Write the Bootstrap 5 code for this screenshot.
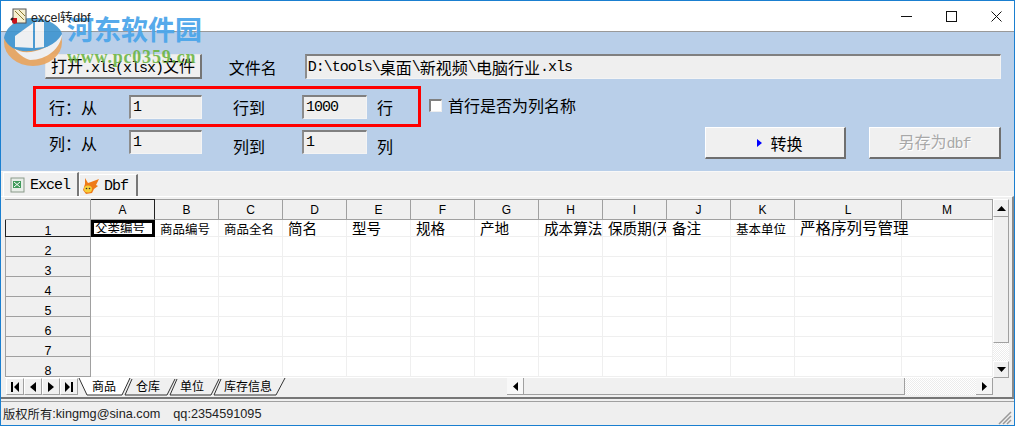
<!DOCTYPE html>
<html lang="zh-CN">
<head>
<meta charset="utf-8">
<title>excel转dbf</title>
<link href="https://cdn.jsdelivr.net/npm/bootstrap@5.3.0/dist/css/bootstrap.min.css" rel="stylesheet">
<style>
html,body{margin:0;padding:0;background:#fff;overflow:hidden}
body{font-family:"Noto Sans CJK SC","Liberation Sans",sans-serif;color:#000}
.win{width:1015px;height:426px;border:1px solid #1a7fd0;position:relative;overflow:hidden;background:#f0f0f0}
.lat{font-family:"Liberation Mono",monospace;font-size:15px;letter-spacing:-1px}
.cjk{font-family:"Noto Sans CJK SC",sans-serif;font-size:16px;line-height:1}
.titlebar{height:31px;background:#fff;border-bottom:1px solid #999;padding-left:9px}
.title-top{position:relative;z-index:3}
.title-txt{font:12.5px "Liberation Sans",sans-serif;color:#222;margin-left:4px}
.winbtns{margin-left:auto;padding-right:12px;gap:34px}
.panel{height:139px;background:#b9cfe9;padding:22px 13px 0 32px}
.row-a{height:25px;margin-bottom:16px}
.row-b{height:24px;margin-bottom:11px}
.row-c{height:29px}
.vb-btn{background:#f0f0f0;border-style:solid;border-width:1px 2px 2px 1px;border-color:#fff #6f6f6f #6f6f6f #fff;border-radius:0;padding:0;color:#000;line-height:1}
.vb-btn:disabled{background:#f0f0f0;opacity:1;color:#a8a8a8;border-color:#fff #6f6f6f #6f6f6f #fff;text-shadow:1px 1px 0 #fff}
.btn-open{width:157px;height:25px;margin-left:12px;border-width:1px 2px 2px 1px;border-color:#e8e8e8 #757575 #757575 #e8e8e8}
.btn-go{width:141px;height:32px;padding-left:10px}
.btn-save{width:132px;height:32px;margin-left:23px}
.btn-pair{margin-top:-3px}
.vb-input{background:#efefef;border-style:solid;border-width:2px 1px 1px 2px;border-color:#808080 #f4f4f4 #f4f4f4 #8c8c8c;border-radius:0;padding:0 0 0 2px;color:#000;box-shadow:none;line-height:1;height:24px;min-height:0}
.vb-input:focus{background:#efefef;border-color:#808080 #f4f4f4 #f4f4f4 #8c8c8c;box-shadow:none}
.lbl{white-space:nowrap;flex:none}
.w-open-label{margin-left:27px;width:76px}
.w-path{width:697px;height:25px;padding-left:1px}
.w-f1{width:73px}.w-f2{width:65px}
.ml-l{margin-left:16px;width:80px}.ml-n{margin-left:31px;width:69px}
.ml-u{margin-left:10px;width:52px}
.lbl-up{margin-top:-4px}
.lbl-c{padding-top:5px}
.lbl-d{padding-top:8px}
.vb-check{width:13px;height:13px;margin:-4px 6px 0 0;border-radius:0!important;border-style:solid;border-width:2px 1px 1px 2px;border-color:#808080 #eee #eee #808080;background:#fff;flex:none}
.tabstrip{height:25px;background:#f0f0f0;border-top:1px solid #f8f8f8;padding-left:2px;align-items:flex-end}
.ptab{height:23px;background:#f0f0f0;border:1px solid #fff;border-right:2px solid #777;border-bottom:0;font-family:"Liberation Mono",monospace;font-size:15px;letter-spacing:-1px;font-weight:400;padding:0 0 0 2px;gap:4px;white-space:nowrap}
.ptab-a{width:76px;height:24px}.ptab-b{width:59px;height:22px;margin-left:0}
.ptab-t{padding-top:3px}
.page{height:203px;padding:2px 0 0 4px;background:#f0f0f0;border-bottom:2px solid #777;border-top:1px solid #fff;border-right:2px solid #8a8a8a}
.gridwrap{height:179px}
.sheetcol{width:988px;flex:none}
.xgrid{width:988px;height:179px;overflow:hidden;background:#fff}
.xtb{table-layout:fixed;border-collapse:separate;border-spacing:0;width:988px;font-size:13px}
.xtb th,.xtb td{padding:0;white-space:nowrap;overflow:hidden;box-sizing:border-box;border-right:1px solid #efefef;border-bottom:1px solid #efefef}
.xtb th{background:#f0f0f0;font:12px "Liberation Sans",sans-serif;color:#000;text-align:center;border-right:1px solid #a0a0a0;border-bottom:1px solid #a0a0a0}
.xtb thead th{height:21px;border-top:1px solid #a0a0a0;vertical-align:middle;padding-top:1px}
.xtb thead th.hd-sel{border-top:1px solid #222;border-right:1px solid #222}
.xtb tbody th{height:20px;vertical-align:bottom;line-height:10px;padding-bottom:0;border-left:1px solid #a0a0a0;font-size:12.5px}
.xtb tbody tr:first-child th{height:17px;border-bottom:1px solid #222;border-left:1px solid #222}
.xtb tbody td{height:20px}
.xtb tbody tr:first-child td{height:17px;vertical-align:top;line-height:15px}
.ct{display:block;font-family:"Noto Sans CJK SC",sans-serif;color:#000}
.ct-s{font-size:12.5px;padding-left:5px;margin-top:2px;line-height:14px}
.ct-l{font-size:14.6px;padding-left:5px;line-height:15px;margin-top:0}
.ct-x{font-size:15.5px}
.xtb .sel-cell{border:3px solid #000;outline:0}
.sel-cell .ct{font-size:12.5px;line-height:11px;padding-left:1px;margin-top:-1px;height:11px;overflow:hidden}
.xtb td.td-over{overflow:visible}
.vscroll{width:16px;margin-left:0;background:#f0f0f0;flex:none}
.sbtn{background:#f0f0f0;border-style:solid;border-width:1px;border-color:#fff #a0a0a0 #a0a0a0 #fff;flex:none;display:flex;align-items:center;justify-content:center}
.sb-up{height:18px}.sb-dn{height:17px}
.sb-thumb{height:126px;background:#f0f0f0;border-bottom:1px solid #a0a0a0;border-right:1px solid #a0a0a0;border-left:1px solid #fff}
.sb-track{flex:1;background:repeating-conic-gradient(#ececec 0 25%,#fff 0 50%) 0 0/2px 2px}
.sheetbar{height:18px;background:#f0f0f0}
.navb{width:18px;height:17px;background:#f0f0f0;border:1px solid #a0a0a0;border-top-color:#fff;border-left-color:#fff;display:flex;align-items:center;justify-content:center;flex:none}
.sheetnav{padding-left:1px;flex:none}
.hs-left{width:17px;height:17px;margin-left:218px;background:#f8f8f8;border-right:1px solid #a0a0a0;border-bottom:1px solid #a0a0a0}
.hs-thumb{width:381px;height:17px;border-bottom:1px solid #a0a0a0;border-right:1px solid #a0a0a0;background:#f0f0f0;flex:none}
.hs-track{width:71px;height:17px;flex:none;background:repeating-conic-gradient(#ececec 0 25%,#fff 0 50%) 0 0/2px 2px}
.hs-right{width:17px;height:17px;border-right:1px solid #a0a0a0;border-bottom:1px solid #a0a0a0;background:#f5f5f5}
.statusbar{height:24px;background:#efefef;border-top:1px solid #a0a0a0;margin-top:2px;padding:0 2px 0 2px;font:12.7px "Liberation Sans",sans-serif;color:#222;white-space:nowrap}
.st-c{font-family:"Noto Sans CJK SC",sans-serif;font-size:12.3px}
.st-q{margin-left:13px}
.grip{margin-left:auto;align-self:flex-end}
.redbox{position:absolute;left:32px;top:85px;width:388px;height:41px;border:3px solid #f00;pointer-events:none}
.wm{position:absolute;left:1px;top:14px;pointer-events:none}
.wm-logo{opacity:.9;display:block;margin-top:3px}
.wm-cn{position:absolute;left:65px;top:-2px;font:700 27px/32px "Noto Sans CJK SC",sans-serif;color:#4da6ea;white-space:nowrap;opacity:.95}
.wm-en{position:absolute;left:65px;top:32px;font:700 18px/20px "Liberation Serif",serif;color:#66b33a;white-space:nowrap;opacity:.85;letter-spacing:.8px}
</style>
</head>
<body>
<div class="win d-flex flex-column">
  <div class="titlebar d-flex align-items-center flex-none">
    <svg class="title-top" width="17" height="17" viewBox="0 0 17 17" aria-hidden="true"><rect x="3" y="1" width="13" height="14" fill="#f5efd0" stroke="#555"/><path d="M5 3l9 9M9 2l6 6" stroke="#8a7a30"/><path d="M2 10l5 0 0 5-3 1-2-2z" fill="#c8141c"/><path d="M1 12l2-2" stroke="#222" stroke-width="2"/></svg>
    <span class="title-txt title-top">excel转dbf</span>
    <div class="winbtns d-flex align-items-center">
      <svg width="11" height="11" viewBox="0 0 11 11" aria-hidden="true"><path d="M0 5.500h11" stroke="#111"/></svg>
      <svg width="11" height="11" viewBox="0 0 11 11" aria-hidden="true"><rect x=".5" y=".5" width="10" height="10" fill="none" stroke="#111"/></svg>
      <svg width="11" height="11" viewBox="0 0 11 11" aria-hidden="true"><path d="M.5.5l10 10M10.500.5l-10 10" stroke="#111"/></svg>
    </div>
  </div>

  <div class="panel flex-none">
    <div class="row-a d-flex align-items-center">
      <button class="btn vb-btn btn-open flex-none" type="button"><span class="cjk">打开</span><span class="lat">.xls(xlsx)</span><span class="cjk">文件</span></button>
      <span class="cjk lbl w-open-label">文件名</span>
      <div class="form-control vb-input w-path d-flex align-items-center flex-none"><span class="lat">D:\tools\</span><span class="cjk">桌面</span><span class="lat">\</span><span class="cjk">新视频</span><span class="lat">\</span><span class="cjk">电脑行业</span><span class="lat">.xls</span></div>
    </div>
    <div class="row-b d-flex align-items-center">
      <span class="cjk lbl ml-l">行：从</span>
      <input class="form-control vb-input lat w-f1 flex-none" value="1" aria-label="行从">
      <span class="cjk lbl ml-n">行到</span>
      <input class="form-control vb-input lat w-f2 flex-none" value="1000" aria-label="行到">
      <span class="cjk lbl ml-u">行</span>
      <input class="form-check-input vb-check" type="checkbox" id="hdr"><label class="cjk lbl lbl-up" for="hdr">首行是否为列名称</label>
    </div>
    <div class="row-c d-flex align-items-start">
      <span class="cjk lbl ml-l lbl-c">列：从</span>
      <input class="form-control vb-input lat w-f1 flex-none" value="1" aria-label="列从">
      <span class="cjk lbl ml-n lbl-d">列到</span>
      <input class="form-control vb-input lat w-f2 flex-none" value="1" aria-label="列到">
      <span class="cjk lbl ml-u lbl-d">列</span>
      <div class="d-flex ms-auto btn-pair">
        <button class="btn vb-btn btn-go d-flex align-items-center justify-content-center gap-2" type="button"><svg width="5" height="8" viewBox="0 0 5 8" aria-hidden="true"><path d="M0 0l5 4-5 4z" fill="#00f"/></svg><span class="cjk">转换</span></button>
        <button class="btn vb-btn btn-save" type="button" disabled><span class="cjk">另存为</span><span class="lat">dbf</span></button>
      </div>
    </div>
  </div>

  <div class="tabstrip d-flex flex-none">
    <div class="ptab ptab-a d-flex align-items-center">
      <svg width="16" height="16" viewBox="0 0 16 16" class="ms-1" aria-hidden="true"><rect x="1" y="1" width="13" height="14" fill="#e8eee8" stroke="#8a9a8a"/><rect x="3" y="4" width="8" height="7" fill="#3f9a5a"/><path d="M4 5l6 5M10 5l-6 5" stroke="#fff"/></svg>
      <span class="ptab-t">Excel</span>
    </div>
    <div class="ptab ptab-b d-flex align-items-center">
      <svg width="18" height="16" viewBox="0 0 18 16" aria-hidden="true"><path d="M3 0l3 5 3-1 8-3-3 6 2 1-4 3-2 4-6 1-3-4 2-6z" fill="#ee7a18"/><ellipse cx="6" cy="11" rx="4" ry="3.500" fill="#f6cf3a"/><circle cx="4.500" cy="10.500" r=".8" fill="#333"/><circle cx="7.500" cy="10.500" r=".8" fill="#333"/></svg>
      <span class="ptab-t">Dbf</span>
    </div>
  </div>

  <div class="page flex-none">
    <div class="gridwrap d-flex">
      <div class="sheetcol">
        <div class="xgrid">
          <table class="xtb">
            <colgroup><col style="width:86px"><col style="width:64px"><col style="width:64px"><col style="width:64px"><col style="width:64px"><col style="width:64px"><col style="width:64px"><col style="width:64px"><col style="width:64px"><col style="width:64px"><col style="width:64px"><col style="width:64px"><col style="width:107px"><col style="width:91px"></colgroup>
            <thead><tr><th></th><th class="hd-sel">A</th><th>B</th><th>C</th><th>D</th><th>E</th><th>F</th><th>G</th><th>H</th><th>I</th><th>J</th><th>K</th><th>L</th><th>M</th></tr></thead>
            <tbody>
              <tr><th>1</th><td class="sel-cell"><span class="ct">父类编号</span></td><td><span class="ct ct-s">商品编号</span></td><td><span class="ct ct-s">商品全名</span></td><td><span class="ct ct-l">简名</span></td><td><span class="ct ct-l">型号</span></td><td><span class="ct ct-l">规格</span></td><td><span class="ct ct-l">产地</span></td><td><span class="ct ct-l">成本算法</span></td><td><span class="ct ct-l">保质期(天</span></td><td><span class="ct ct-l">备注</span></td><td><span class="ct ct-s">基本单位</span></td><td class="td-over"><span class="ct ct-l ct-x">严格序列号管理</span></td><td></td></tr>
              <tr><th>2</th><td></td><td></td><td></td><td></td><td></td><td></td><td></td><td></td><td></td><td></td><td></td><td></td><td></td></tr>
              <tr><th>3</th><td></td><td></td><td></td><td></td><td></td><td></td><td></td><td></td><td></td><td></td><td></td><td></td><td></td></tr>
              <tr><th>4</th><td></td><td></td><td></td><td></td><td></td><td></td><td></td><td></td><td></td><td></td><td></td><td></td><td></td></tr>
              <tr><th>5</th><td></td><td></td><td></td><td></td><td></td><td></td><td></td><td></td><td></td><td></td><td></td><td></td><td></td></tr>
              <tr><th>6</th><td></td><td></td><td></td><td></td><td></td><td></td><td></td><td></td><td></td><td></td><td></td><td></td><td></td></tr>
              <tr><th>7</th><td></td><td></td><td></td><td></td><td></td><td></td><td></td><td></td><td></td><td></td><td></td><td></td><td></td></tr>
              <tr><th>8</th><td></td><td></td><td></td><td></td><td></td><td></td><td></td><td></td><td></td><td></td><td></td><td></td><td></td></tr>
            </tbody>
          </table>
        </div>
      </div>
      <div class="vscroll d-flex flex-column">
        <div class="sbtn sb-up"><svg width="9" height="5" viewBox="0 0 9 5" aria-hidden="true"><path d="M4.500 0l4.500 5h-9z" fill="#000"/></svg></div>
        <div class="sb-thumb"></div>
        <div class="sb-track"></div>
        <div class="sbtn sb-dn"><svg width="9" height="5" viewBox="0 0 9 5" aria-hidden="true"><path d="M0 0h9l-4.500 5z" fill="#000"/></svg></div>
      </div>
    </div>
    <div class="sheetbar d-flex">
      <div class="sheetnav d-flex">
        <div class="navb"><svg width="8" height="10" viewBox="0 0 8 10" aria-hidden="true"><path d="M0 0h2v10h-2zM8 0v10l-5-5z" fill="#000"/></svg></div>
        <div class="navb"><svg width="6" height="10" viewBox="0 0 6 10" aria-hidden="true"><path d="M6 0v10l-6-5z" fill="#000"/></svg></div>
        <div class="navb"><svg width="6" height="10" viewBox="0 0 6 10" aria-hidden="true"><path d="M0 0v10l6-5z" fill="#000"/></svg></div>
        <div class="navb"><svg width="8" height="10" viewBox="0 0 8 10" aria-hidden="true"><path d="M0 0v10l5-5zM6 0h2v10h-2z" fill="#000"/></svg></div>
      </div>
      <svg width="211" height="18" viewBox="0 0 211 18" class="flex-none" aria-label="工作表标签">
        <path d="M136 17h62l9-17" fill="none" stroke="#333"/><path d="M136 17l7-16" fill="none" stroke="#333"/>
        <path d="M92 17h41l8-16" fill="none" stroke="#333"/><path d="M92 17l7-16" fill="none" stroke="#333"/>
        <path d="M47 17h42l8-16" fill="none" stroke="#333"/><path d="M47 17l7-16" fill="none" stroke="#333"/>
        <path d="M1 0l8 17h35l8-17z" fill="#fff"/><path d="M1 0l8 17h35l8-17" fill="none" stroke="#333"/>
        <text x="14" y="13" font-size="12" font-family="Noto Sans CJK SC" fill="#000">商品</text>
        <text x="58" y="13" font-size="12" font-family="Noto Sans CJK SC" fill="#000">仓库</text>
        <text x="102" y="13" font-size="12" font-family="Noto Sans CJK SC" fill="#000">单位</text>
        <text x="146" y="13" font-size="12" font-family="Noto Sans CJK SC" fill="#000">库存信息</text>
      </svg>
      <div class="hs-left d-flex align-items-center justify-content-center flex-none"><svg width="5" height="9" viewBox="0 0 5 9" aria-hidden="true"><path d="M5 0v9l-5-4.500z" fill="#000"/></svg></div>
      <div class="hs-thumb"></div>
      <div class="hs-track"></div>
      <div class="hs-right d-flex align-items-center justify-content-center flex-none"><svg width="5" height="9" viewBox="0 0 5 9" aria-hidden="true"><path d="M0 0v9l5-4.500z" fill="#000"/></svg></div>
    </div>
  </div>

  <div class="statusbar d-flex align-items-center flex-none">
    <span class="st-c">版权所有</span><span>:kingmg@sina.com</span><span class="st-q">qq:2354591095</span>
    <svg class="grip" width="14" height="14" viewBox="0 0 14 14" aria-hidden="true"><path d="M13 1L1 13M13 5L5 13M13 9L9 13" stroke="#999" stroke-width="1.500"/></svg>
  </div>

  <div class="redbox"></div>

  <div class="wm">
    <svg class="wm-logo" width="64" height="50" viewBox="0 0 64 50" aria-hidden="true">
      <ellipse cx="31" cy="24" rx="29" ry="24" fill="#eaa45c"/>
      <path d="M12 30C20 38 45 35 60 16C59 30 45 42 28 42C22 40 16 36 12 30Z" fill="#f3f3f3"/>
      <path d="M2 20C4 8 16 0 31 0C46 0 58 8 60 16C54 27 40 32 28 33C16 34 6 30 2 20Z" fill="#3f95d0"/>
      <path d="M13 29V18L31 5V30Z" fill="#f4f4f4"/>
      <path d="M33 4H42V29L33 30Z" fill="#f4f4f4"/>
    </svg>
    <span class="wm-cn">河东软件园</span>
    <span class="wm-en">www.pc0359.cn</span>
  </div>
</div>
<script src="https://cdn.jsdelivr.net/npm/bootstrap@5.3.0/dist/js/bootstrap.bundle.min.js"></script>
</body>
</html>
